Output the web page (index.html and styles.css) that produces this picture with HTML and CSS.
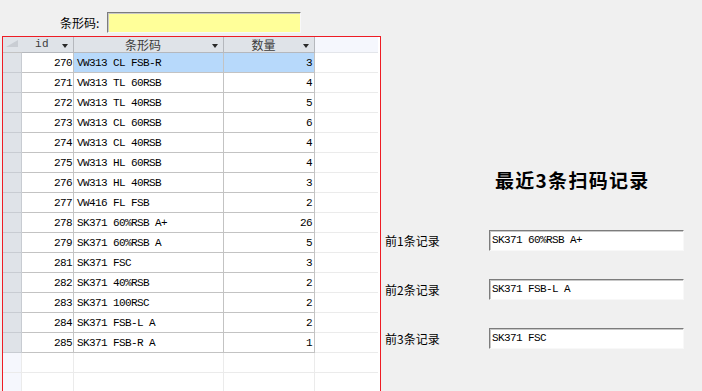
FILE: index.html
```html
<!DOCTYPE html>
<html lang="zh">
<head>
<meta charset="utf-8">
<title>扫码</title>
<link rel="stylesheet" href="styles.css">
</head>
<body>
<div class="search">
  <span class="search-label">条形码:</span>
  <div class="search-input"></div>
</div>
<div class="main">
  <div class="grid">
    <div class="row head">
      <div class="cell sel corner"><svg width="18" height="15" viewBox="0 0 18 15"><polygon points="3,10 15,10 15,3" fill="#c9cdd3"/></svg></div>
      <div class="cell c-id hc"><span class="ht">id</span><span class="arrow"></span></div>
      <div class="cell c-code hc"><span class="ht">条形码</span><span class="arrow"></span></div>
      <div class="cell c-qty hc"><span class="ht">数量</span><span class="arrow"></span></div>
      <div class="cell c-rest hrest"></div>
    </div>
    <div class="row data selected"><div class="cell sel"></div><div class="cell c-id num">270</div><div class="cell c-code txt">VW313 CL FSB-R</div><div class="cell c-qty num">3</div><div class="cell c-rest"></div></div>
    <div class="row data"><div class="cell sel"></div><div class="cell c-id num">271</div><div class="cell c-code txt">VW313 TL 60RSB</div><div class="cell c-qty num">4</div><div class="cell c-rest"></div></div>
    <div class="row data"><div class="cell sel"></div><div class="cell c-id num">272</div><div class="cell c-code txt">VW313 TL 40RSB</div><div class="cell c-qty num">5</div><div class="cell c-rest"></div></div>
    <div class="row data"><div class="cell sel"></div><div class="cell c-id num">273</div><div class="cell c-code txt">VW313 CL 60RSB</div><div class="cell c-qty num">6</div><div class="cell c-rest"></div></div>
    <div class="row data"><div class="cell sel"></div><div class="cell c-id num">274</div><div class="cell c-code txt">VW313 CL 40RSB</div><div class="cell c-qty num">4</div><div class="cell c-rest"></div></div>
    <div class="row data"><div class="cell sel"></div><div class="cell c-id num">275</div><div class="cell c-code txt">VW313 HL 60RSB</div><div class="cell c-qty num">4</div><div class="cell c-rest"></div></div>
    <div class="row data"><div class="cell sel"></div><div class="cell c-id num">276</div><div class="cell c-code txt">VW313 HL 40RSB</div><div class="cell c-qty num">3</div><div class="cell c-rest"></div></div>
    <div class="row data"><div class="cell sel"></div><div class="cell c-id num">277</div><div class="cell c-code txt">VW416 FL FSB</div><div class="cell c-qty num">2</div><div class="cell c-rest"></div></div>
    <div class="row data"><div class="cell sel"></div><div class="cell c-id num">278</div><div class="cell c-code txt">SK371 60%RSB A+</div><div class="cell c-qty num">26</div><div class="cell c-rest"></div></div>
    <div class="row data"><div class="cell sel"></div><div class="cell c-id num">279</div><div class="cell c-code txt">SK371 60%RSB A</div><div class="cell c-qty num">5</div><div class="cell c-rest"></div></div>
    <div class="row data"><div class="cell sel"></div><div class="cell c-id num">281</div><div class="cell c-code txt">SK371 FSC</div><div class="cell c-qty num">3</div><div class="cell c-rest"></div></div>
    <div class="row data"><div class="cell sel"></div><div class="cell c-id num">282</div><div class="cell c-code txt">SK371 40%RSB</div><div class="cell c-qty num">2</div><div class="cell c-rest"></div></div>
    <div class="row data"><div class="cell sel"></div><div class="cell c-id num">283</div><div class="cell c-code txt">SK371 100RSC</div><div class="cell c-qty num">2</div><div class="cell c-rest"></div></div>
    <div class="row data"><div class="cell sel"></div><div class="cell c-id num">284</div><div class="cell c-code txt">SK371 FSB-L A</div><div class="cell c-qty num">2</div><div class="cell c-rest"></div></div>
    <div class="row data"><div class="cell sel"></div><div class="cell c-id num">285</div><div class="cell c-code txt">SK371 FSB-R A</div><div class="cell c-qty num">1</div><div class="cell c-rest"></div></div>
    <div class="row empty"><div class="cell sel"></div><div class="cell c-id"></div><div class="cell c-code"></div><div class="cell c-qty"></div><div class="cell c-rest"></div></div>
    <div class="row empty"><div class="cell sel"></div><div class="cell c-id"></div><div class="cell c-code"></div><div class="cell c-qty"></div><div class="cell c-rest"></div></div>
  </div>
  <div class="side">
    <div class="title">最近3条扫码记录</div>
    <div class="records">
      <div class="record"><span class="rec-label">前1条记录</span><div class="rec-input">SK371 60%RSB A+</div></div>
      <div class="record"><span class="rec-label">前2条记录</span><div class="rec-input">SK371 FSB-L A</div></div>
      <div class="record"><span class="rec-label">前3条记录</span><div class="rec-input">SK371 FSC</div></div>
    </div>
  </div>
</div>
</body>
</html>
```
FILE: styles.css
```css
* { box-sizing: border-box; }
body {
  margin: 0;
  width: 702px;
  height: 391px;
  overflow: hidden;
  background: #f0f0f0;
  font-family: "Noto Sans CJK SC", sans-serif;
  font-size: 12px;
  color: #000;
}
.search {
  display: flex;
  align-items: center;
  height: 33px;
  padding: 12px 0 0 60px;
}
.search-label {
  width: 47px;
  line-height: 21px;
}
.search-input {
  width: 194px;
  height: 21px;
  background: #ffff99;
  border: 1px solid;
  border-color: #7c7c7c #f8f8f8 #f8f8f8 #7c7c7c;
  box-shadow: inset 1px 1px 0 #c8c8c8;
}
.main {
  display: flex;
  margin-top: 3px;
  height: 355px;
}
.grid {
  margin-left: 2px;
  width: 379px;
  height: 355px;
  overflow: hidden;
  border: 1px solid #ee1c24;
  border-bottom: none;
  background: #fff;
  flex: none;
}
.row {
  display: flex;
  height: 20px;
}
.row.head { height: 16px; }
.cell {
  height: 100%;
  border-right: 1px solid #c3c3c3;
  border-bottom: 1px solid #c3c3c3;
  white-space: pre;
  overflow: hidden;
  display: flex;
  align-items: center;
}
.sel { width: 19px; background: #dfe3e8; border-color: #c8ccd2; }
.c-id { width: 52px; }
.c-code { width: 150px; }
.c-qty { width: 91px; }
.c-rest { width: 63px; border-right: none; border-bottom-color: #ebebeb; }
.corner { border-right: none; border-bottom-color: #c3c3c3; }
.corner svg { display: block; }
.hc {
  background: #dfe3e8;
  color: #3c3c3c;
  border-color: #b5b8bd;
}
.ht {
  flex: 1;
  text-align: center;
  line-height: 15px;
}
.c-id .ht { font-family: "Liberation Mono", monospace; font-size: 11px; letter-spacing: 0.4px; }
.arrow {
  width: 0;
  height: 0;
  margin: 2px 5px 0 0;
  border-left: 3.5px solid transparent;
  border-right: 3.5px solid transparent;
  border-top: 4px solid #2a2a2a;
}
.hrest { background: #f5f7fd; border-bottom-color: #e3e5ea; }
.num, .txt {
  font-family: "Liberation Mono", "Noto Sans CJK SC", monospace;
  font-size: 11px;
  letter-spacing: -0.6px;
}
.num { justify-content: flex-end; padding-right: 1px; }
.c-qty.num { padding-right: 2px; }
.txt { padding-left: 3px; }
.selected .c-code, .selected .c-qty { background: #b7d9fb; }
.empty .cell { border-color: #ebebeb; }
.empty .sel { background: #f5f7fd; }
.side {
  flex: 1;
  display: flex;
  flex-direction: column;
  padding-left: 4px;
}
.title {
  margin-top: 133px;
  padding-left: 110px;
  font-size: 19px;
  line-height: 22px;
  font-weight: bold;
  letter-spacing: 1.3px;
}
.records {
  display: flex;
  flex-direction: column;
  gap: 28px;
  margin-top: 39px;
}
.record {
  display: flex;
  align-items: center;
  height: 21px;
}
.rec-label { width: 104px; }
.rec-input {
  width: 195px;
  height: 21px;
  background: #fff;
  border: 1px solid;
  border-color: #7c7c7c #f8f8f8 #f8f8f8 #7c7c7c;
  box-shadow: inset 1px 1px 0 #c8c8c8;
  padding-left: 2px;
  font-family: "Liberation Mono", monospace;
  font-size: 11px;
  letter-spacing: -0.6px;
  line-height: 19px;
  white-space: pre;
}
```
